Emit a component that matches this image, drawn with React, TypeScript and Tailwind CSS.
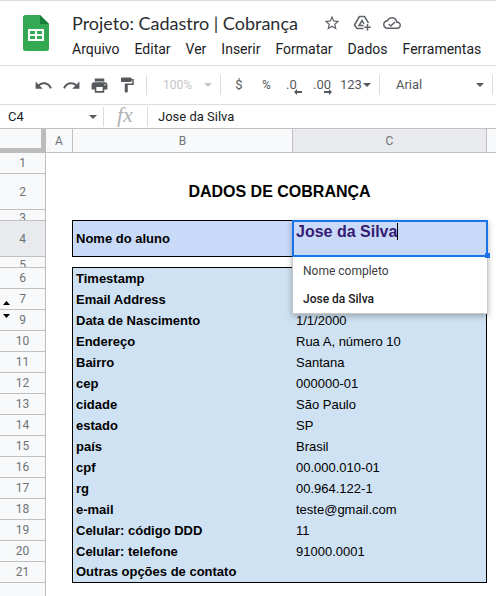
import React from "react";

const menus = ["Arquivo", "Editar", "Ver", "Inserir", "Formatar", "Dados", "Ferramentas"];

const records = [
  { row: 6, label: "Timestamp", value: "" },
  { row: 7, label: "Email Address", value: "" },
  { row: 9, label: "Data de Nascimento", value: "1/1/2000" },
  { row: 10, label: "Endereço", value: "Rua A, número 10" },
  { row: 11, label: "Bairro", value: "Santana" },
  { row: 12, label: "cep", value: "000000-01" },
  { row: 13, label: "cidade", value: "São Paulo" },
  { row: 14, label: "estado", value: "SP" },
  { row: 15, label: "país", value: "Brasil" },
  { row: 16, label: "cpf", value: "00.000.010-01" },
  { row: 17, label: "rg", value: "00.964.122-1" },
  { row: 18, label: "e-mail", value: "teste@gmail.com" },
  { row: 19, label: "Celular: código DDD", value: "11" },
  { row: 20, label: "Celular: telefone", value: "91000.0001" },
  { row: 21, label: "Outras opções de contato", value: "" },
];

function Caret({ className = "" }: { className?: string }) {
  return (
    <svg className={`h-1 w-2 shrink-0 ${className}`} viewBox="0 0 8 4" fill="currentColor" aria-hidden="true">
      <path d="M0 0h8L4 4z" />
    </svg>
  );
}

function Icon({ d, className }: { d: string; className: string }) {
  return (
    <svg className={`shrink-0 ${className}`} viewBox="0 0 24 24" fill="currentColor" aria-hidden="true">
      <path d={d} />
    </svg>
  );
}

function Separator() {
  return <div className="h-5 w-px shrink-0 bg-[#dadce0]" />;
}

function SheetsLogo() {
  return (
    <svg className="h-9 w-[26px] shrink-0" viewBox="0 0 26 36" aria-hidden="true">
      <path d="M2.5 0H17l9 9v24.5a2.5 2.5 0 0 1-2.5 2.5h-21A2.5 2.5 0 0 1 0 33.5v-31A2.5 2.5 0 0 1 2.5 0z" fill="#34a853" />
      <path d="M17 0l9 9h-9z" fill="#188038" />
      <path d="M5 14h16v12H5zM7 16v3h5v-3zM14 16v3h5v-3zM7 21v3h5v-3zM14 21v3h5v-3z" fill="#fff" fillRule="evenodd" />
    </svg>
  );
}

function DecimalArrow({ flip }: { flip?: boolean }) {
  return (
    <svg className="h-[6px] w-2 shrink-0" viewBox="0 0 8 6" fill="currentColor" aria-hidden="true">
      <path d={flip ? "M8 3L5 0v2H0v2h5v2z" : "M0 3l3-3v2h5v2H3v2z"} />
    </svg>
  );
}

function RowHead({ children, tall, active }: { children?: React.ReactNode; tall?: string; active?: boolean }) {
  return (
    <th
      scope="row"
      className={`relative border-r border-b border-[#c0c0c0] p-0 text-center font-[Roboto,sans-serif] text-[12px] leading-4 font-normal text-[#6f7377] ${
        active ? "bg-[#e8eaed]" : "bg-[#f8f9fa]"
      }`}
    >
      <div className={`flex justify-center overflow-hidden ${tall ?? "h-5 items-center"}`}>{children}</div>
    </th>
  );
}

export default function App() {
  return (
    <div className="flex min-h-screen flex-col overflow-hidden border-t border-[#dadce0] bg-white font-[Roboto,sans-serif] text-black">
      <header className="flex h-[65px] shrink-0 items-center border-b border-[#dadce0] pl-[23px]">
        <SheetsLogo />
        <div className="ml-5 min-w-0 flex-1 pt-1">
          <div className="flex h-7 items-center text-[#5f6368]">
            <h1 className="ml-[3px] font-[Lato,sans-serif] text-[18px] leading-7 whitespace-nowrap text-[#2b2d30]">
              Projeto: Cadastro | Cobrança
            </h1>
            <div className="ml-auto flex gap-3 pr-[95px]">
              <button type="button" aria-label="Com estrela">
                <Icon
                  className="size-[18px]"
                  d="M22 9.24l-7.19-.62L12 2 9.19 8.63 2 9.24l5.46 4.73L5.82 21 12 17.27 18.18 21l-1.63-7.03L22 9.24zM12 15.4l-3.76 2.27 1-4.28-3.32-2.88 4.38-.38L12 6.1l1.71 4.04 4.38.38-3.32 2.88 1 4.28L12 15.4z"
                />
              </button>
              <button type="button" aria-label="Adicionar atalho ao Drive">
                <svg className="size-[18px]" viewBox="0 0 18 18" fill="none" stroke="currentColor" strokeWidth="1.5" aria-hidden="true">
                  <path d="M10.5 14.5H4L1.5 11 6.5 2.5h5l4 6.7" strokeLinejoin="round" />
                  <path d="M10.5 11.5H6L9 6.5l2 3.5" />
                  <path d="M14.5 10v6.5M11.25 13.25h6.5" />
                </svg>
              </button>
              <button type="button" aria-label="Salvo no Drive">
                <Icon
                  className="size-[18px]"
                  d="M19.35 10.04C18.67 6.59 15.64 4 12 4 9.11 4 6.6 5.64 5.35 8.04 2.34 8.36 0 10.91 0 14c0 3.31 2.69 6 6 6h13c2.76 0 5-2.24 5-5 0-2.64-2.05-4.78-4.65-4.96zM19 18H6c-2.21 0-4-1.79-4-4s1.79-4 4-4h.71C7.37 7.69 9.48 6 12 6c3.04 0 5.5 2.46 5.5 5.5v.5H19c1.66 0 3 1.34 3 3s-1.34 3-3 3zM10.5 14.6l-2.1-2.1L7 13.9l3.5 3.5 6-6-1.4-1.4z"
                />
              </button>
            </div>
          </div>
          <nav className="flex gap-[15px] pl-[3px]">
            {menus.map((m) => (
              <button key={m} type="button" className="text-[14px] leading-6 whitespace-nowrap text-[#202124]">
                {m}
              </button>
            ))}
          </nav>
        </div>
      </header>

      <div className="flex h-[39px] shrink-0 items-center border-b border-[#dadce0] pl-[34px] text-[13px] text-[#55585c]">
        <div className="flex items-center gap-[9px]">
          <button type="button" aria-label="Desfazer">
            <Icon
              className="size-[19px]"
              d="M12.5 8c-2.65 0-5.05.99-6.9 2.6L2 7v9h9l-3.62-3.62c1.39-1.16 3.16-1.88 5.12-1.88 3.54 0 6.55 2.31 7.6 5.5l2.37-.78C21.08 11.03 17.15 8 12.5 8z"
            />
          </button>
          <button type="button" aria-label="Refazer">
            <Icon
              className="size-[19px]"
              d="M18.4 10.6C16.55 8.99 14.15 8 11.5 8c-4.65 0-8.58 3.03-9.96 7.22L3.9 16c1.05-3.19 4.05-5.5 7.6-5.5 1.95 0 3.73.72 5.12 1.88L13 16h9V7l-3.6 3.6z"
            />
          </button>
          <button type="button" aria-label="Imprimir">
            <Icon
              className="size-[19px]"
              d="M19 8H5c-1.66 0-3 1.34-3 3v6h4v4h12v-4h4v-6c0-1.66-1.34-3-3-3zm-3 11H8v-5h8v5zm3-7c-.55 0-1-.45-1-1s.45-1 1-1 1 .45 1 1-.45 1-1 1zm-1-9H6v4h12V3z"
            />
          </button>
          <button type="button" aria-label="Pintar formatação">
            <Icon
              className="size-[18px]"
              d="M18 4V3c0-.55-.45-1-1-1H5c-.55 0-1 .45-1 1v4c0 .55.45 1 1 1h12c.55 0 1-.45 1-1V6h1v4H9v11c0 .55.45 1 1 1h2c.55 0 1-.45 1-1v-9h8V4h-3z"
            />
          </button>
        </div>
        <div className="ml-[10px] flex">
          <Separator />
        </div>
        <label className="relative ml-4 flex w-[49px] shrink-0 items-center text-[#c4c6c8]">
          <select aria-label="Zoom" disabled className="w-full appearance-none text-[12px] leading-5 opacity-100">
            <option>100%</option>
          </select>
          <Caret className="pointer-events-none absolute right-0" />
        </label>
        <div className="ml-2 flex">
          <Separator />
        </div>
        <button type="button" className="ml-[14px] w-2 text-center">$</button>
        <button type="button" className="ml-[18px] w-[11px] text-center text-[12px]">%</button>
        <button type="button" aria-label="Diminuir casas decimais" className="ml-[14px] flex h-5 w-4 items-end">
          <span className="w-2 self-start whitespace-nowrap leading-5">.0</span>
          <DecimalArrow />
        </button>
        <button type="button" aria-label="Aumentar casas decimais" className="ml-[11px] flex h-5 w-[19px] items-end">
          <span className="w-[11px] self-start whitespace-nowrap leading-5">.00</span>
          <DecimalArrow flip />
        </button>
        <button type="button" className="ml-2 flex items-center gap-px leading-5">
          123
          <Caret />
        </button>
        <div className="ml-2 flex">
          <Separator />
        </div>
        <label className="relative ml-4 flex w-[88px] shrink-0 items-center">
          <select aria-label="Fonte" className="w-full appearance-none leading-5">
            <option>Arial</option>
          </select>
          <Caret className="pointer-events-none absolute right-0" />
        </label>
        <div className="ml-2 flex">
          <Separator />
        </div>
      </div>

      <div className="flex h-6 shrink-0 items-center border-b border-[#c0c0c0] text-[13px] text-[#202124]">
        <input aria-label="Caixa de nome" defaultValue="C4" className="w-[81px] pl-2 leading-5 outline-none" />
        <button type="button" aria-label="Intervalos" className="ml-2 text-[#55585c]">
          <Caret />
        </button>
        <div className="ml-[6px] flex">
          <Separator />
        </div>
        <span className="ml-[13px] w-[30px] pb-1 font-['Liberation_Serif',serif] text-[22px] leading-5 text-[#b0b2b4] italic">fx</span>
        <Separator />
        <input aria-label="Barra de fórmulas" defaultValue="Jose da Silva" className="min-w-0 flex-1 pl-[10px] leading-5 outline-none" />
      </div>

      <table className="w-full table-fixed border-separate border-spacing-0 font-['Liberation_Sans',Arial,sans-serif] text-[13px] leading-5">
        <colgroup>
          <col className="w-[46px]" />
          <col className="w-[26px]" />
          <col className="w-[221px]" />
          <col className="w-[194px]" />
          <col />
        </colgroup>
        <thead>
          <tr className="h-6 font-[Roboto,sans-serif] text-[12px] text-[#6f7377]">
            <td className="border-r-[5px] border-b-[5px] border-[#bcbcbc] bg-[#f8f9fa] p-0" />
            <th scope="col" className="border-b border-[#c0c0c0] bg-[#f8f9fa] p-0 font-normal">A</th>
            <th scope="col" className="border-x border-b border-[#c0c0c0] bg-[#f8f9fa] p-0 font-normal">B</th>
            <th scope="col" className="border-r border-b border-[#c0c0c0] bg-[#e8eaed] p-0 font-normal">C</th>
            <td className="border-b border-[#c0c0c0] bg-[#f8f9fa] p-0" />
          </tr>
        </thead>
        <tbody>
          <tr>
            <RowHead>1</RowHead>
            <td colSpan={4} />
          </tr>
          <tr>
            <RowHead tall="h-[35px] items-center">2</RowHead>
            <td />
            <td colSpan={2} className="p-0 text-center text-[16px] font-bold">DADOS DE COBRANÇA</td>
            <td />
          </tr>
          <tr>
            <RowHead tall="h-[10px] items-start">3</RowHead>
            <td className="p-0" />
            <td colSpan={2} className="border-b border-black p-0" />
            <td className="p-0" />
          </tr>
          <tr>
            <RowHead tall="h-[35px] items-center" active>4</RowHead>
            <td />
            <td className="border-b border-l border-black bg-[#c9daf8] py-0 pr-0 pl-[3px] font-bold">Nome do aluno</td>
            <td className="relative bg-[#c9daf8] p-0">
              <div className="absolute -inset-x-px -top-px z-10 shadow-[0_2px_6px_rgba(60,64,67,0.4)]">
                <div className="flex h-[37px] items-start border-2 border-[#1a73e8] bg-[#c9daf8] pl-[2px] text-[16px] font-bold text-[#351c75]">
                  <input aria-label="C4" defaultValue="Jose da Silva" className="field-sizing-content leading-5 outline-none" />
                  <span className="mt-px h-[17px] w-px bg-black" />
                </div>
                <div role="listbox" aria-label="Sugestões" className="border border-t-0 border-[#c8cacc] bg-white font-[Roboto,sans-serif] text-[12px] text-[#3c4043]">
                  <button type="button" role="option" aria-selected="false" className="block h-7 w-full pl-[10px] text-left">
                    Nome completo
                  </button>
                  <button type="button" role="option" aria-selected="true" className="block h-7 w-full pl-[10px] text-left font-medium text-[#202124]">
                    Jose da Silva
                  </button>
                </div>
                <span className="absolute top-[33px] -right-[2px] size-[5px] bg-[#1a73e8]" />
              </div>
            </td>
            <td />
          </tr>
          <tr>
            <RowHead tall="h-[10px] items-start">5</RowHead>
            <td className="p-0" />
            <td colSpan={2} className="border-b border-black p-0" />
            <td className="p-0" />
          </tr>
          {records.map((r, i) => {
            const end = i === records.length - 1 ? "border-b" : "";
            return (
              <tr key={r.row}>
                <RowHead>
                  {r.row}
                  {r.row === 7 && (
                    <svg className="absolute bottom-1 left-[3px] h-1 w-[7px]" viewBox="0 0 7 4" aria-hidden="true">
                      <path d="M0 4h7L3.5 0z" />
                    </svg>
                  )}
                  {r.row === 9 && (
                    <svg className="absolute top-1 left-[3px] h-1 w-[7px]" viewBox="0 0 7 4" aria-hidden="true">
                      <path d="M0 0h7L3.5 4z" />
                    </svg>
                  )}
                </RowHead>
                <td className="p-0" />
                <td className={`border-l border-black bg-[#cfe2f3] py-0 pr-0 pl-[3px] font-bold ${end}`}>{r.label}</td>
                <td className={`border-r border-black bg-[#cfe2f3] py-0 pr-0 pl-[3px] ${end}`}>{r.value}</td>
                <td className="p-0" />
              </tr>
            );
          })}
        </tbody>
      </table>
      <div className="w-[46px] flex-1 border-r border-[#c0c0c0] bg-[#f8f9fa]" />
    </div>
  );
}
